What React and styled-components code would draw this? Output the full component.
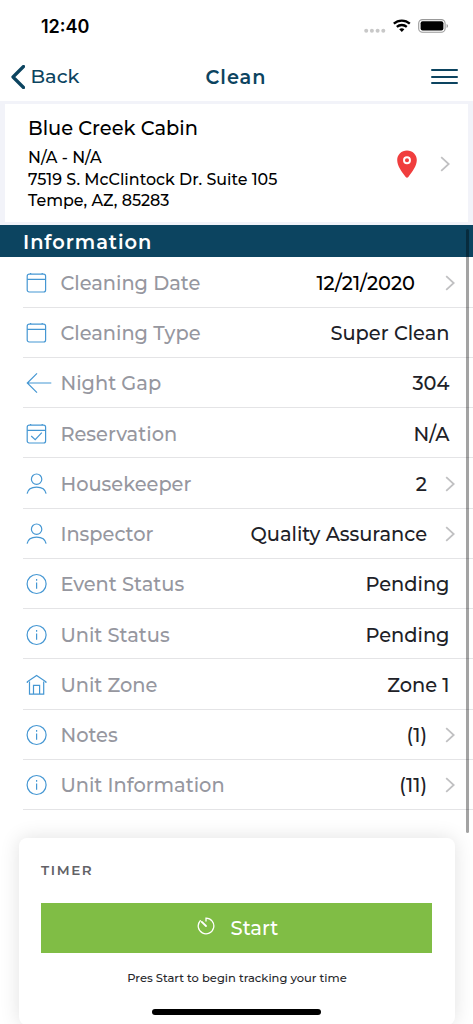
import React from 'react'
import styled, { createGlobalStyle } from 'styled-components'

const GlobalStyle = createGlobalStyle`
  * {
    box-sizing: border-box;
  }

  body {
    margin: 0;
    overflow: hidden;
    background: #fff;
    font-family: Montserrat, Inter, sans-serif;
    font-weight: 500;
  }
`

const Screen = styled.div`
  position: relative;
  display: flex;
  flex-direction: column;
  width: 473px;
  height: 1024px;
  overflow: hidden;
  background: #fff;

  > * {
    flex: none;
  }
`

const Text = styled.span`
  white-space: nowrap;
  letter-spacing: ${({ $spacing }) => $spacing || 0}px;
`

const StatusBar = styled.div`
  display: flex;
  align-items: center;
  justify-content: space-between;
  height: 52px;
  padding: 0 24px 0 41px;
`

const Clock = styled(Text)`
  padding-top: 1px;
  font-family: Inter, sans-serif;
  font-size: 18px;
  font-weight: 600;
  color: #000;
`

const NavBar = styled.div`
  display: grid;
  grid-template-columns: 1fr auto 1fr;
  align-items: center;
  height: 49px;
  padding: 0 15px 0 11px;
  color: #0c4460;
`

const BackButton = styled.div`
  display: flex;
  align-items: center;
  gap: 5.5px;
  font-size: 19.3px;

  span {
    margin-top: -1px;
  }
`

const Title = styled(Text)`
  padding-left: 3px;
  font-size: 19.3px;
  font-weight: 600;
`

const Menu = styled.div`
  display: flex;
  flex-direction: column;
  justify-self: end;
  gap: 4.6px;
  width: 27px;

  span {
    height: 2px;
    border-radius: 1px;
    background: #0c4460;
  }
`

const AddressArea = styled.div`
  height: 124px;
  padding: 3px 5px;
  background: #f2f3f9;
`

const AddressCard = styled.div`
  display: flex;
  align-items: center;
  height: 118px;
  padding: 1px 18px 0 23px;
  background: #fff;
`

const Address = styled.div`
  display: flex;
  flex: 1;
  flex-direction: column;
  color: #000;
  font-size: 15.9px;
  line-height: 21.7px;
`

const PropertyName = styled(Text)`
  margin-bottom: 6px;
  font-size: 19.4px;
  line-height: 26px;
`

const Pin = styled.svg`
  margin-right: 23px;
`

const SectionHeader = styled.div`
  display: flex;
  align-items: center;
  height: 32.3px;
  padding: 2px 0 0 23px;
  background: #0c4460;
  color: #fff;
  font-size: 19.4px;
  font-weight: 600;
`

const Row = styled.div`
  display: flex;
  align-items: center;
  height: 50.25px;
  margin-left: 23px;
  padding: 2px 18px 0 3px;
  border-bottom: 1px solid #e4e4e6;
  font-size: 19.4px;
`

const RowIcon = styled.svg`
  flex: none;
  width: 26px;
  height: 22px;
  margin-right: 8.4px;
  overflow: visible;
  fill: none;
  stroke: #4597d3;
  stroke-width: 1.2;
`

const Label = styled(Text)`
  flex: 1;
  color: #96979f;
`

const Value = styled(Text)`
  color: ${({ $dark }) => ($dark ? '#000' : '#202127')};
  padding-right: ${({ $inset }) => $inset}px;
`

const TimerCard = styled.div`
  display: flex;
  flex-direction: column;
  height: 187px;
  margin: 27.5px 18.5px 0 19px;
  padding: 22px 22.5px 0 22px;
  border-radius: 8px;
  background: #fff;
  box-shadow: 0 0 20px rgba(0, 0, 0, 0.12);
`

const TimerTitle = styled(Text)`
  color: #626266;
  font-size: 13.5px;
  font-weight: 600;
  line-height: 20px;
`

const StartButton = styled.div`
  display: flex;
  align-items: center;
  justify-content: center;
  gap: 16px;
  height: 50px;
  margin-top: 23px;
  padding: 1px 0 0 2px;
  background: #80bd45;
  color: #fff;
  font-size: 19.5px;

  svg {
    margin-bottom: 5px;
  }
`

const Hint = styled(Text)`
  align-self: center;
  margin-top: 16px;
  padding-left: 1px;
  color: #26272b;
  font-size: 11.5px;
  line-height: 18px;
`

const ScrollThumb = styled.div`
  position: absolute;
  top: 229px;
  right: 4px;
  width: 3px;
  height: 604px;
  border-radius: 2px;
  background: rgba(0, 0, 0, 0.36);
`

const HomeIndicator = styled.div`
  position: absolute;
  bottom: 9.5px;
  left: 152px;
  width: 169px;
  height: 5.5px;
  border-radius: 3px;
  background: #000;
`

const Chevron = () => (
  <svg width='10' height='16' viewBox='0 0 10 16' fill='none'>
    <path d='M1.2 1.2 8.7 8 1.2 14.8' stroke='#c0c0c2' strokeWidth='1.8' />
  </svg>
)

const StatusIcons = () => (
  <svg width='86' height='18' viewBox='0 0 86 18'>
    <g fill='#c8c8c8'>
      <circle cx='3.2' cy='13.8' r='2' />
      <circle cx='8.9' cy='13.8' r='2' />
      <circle cx='14.6' cy='13.8' r='2' />
      <circle cx='20.3' cy='13.8' r='2' />
    </g>
    <g fill='none' stroke='#000' strokeWidth='2.3'>
      <path d='M30.8 6.6a12 12 0 0 1 16 0' />
      <path d='M33.8 9.9a7.6 7.6 0 0 1 10 0' />
    </g>
    <path d='M36.2 12.3a4 4 0 0 1 5.2 0L38.8 15z' />
    <rect x='55.7' y='2.6' width='26.4' height='12.6' rx='3.8' fill='none' stroke='#999' strokeWidth='1.1' />
    <rect x='57.6' y='4.3' width='22.8' height='9.2' rx='2' />
    <path d='M83.6 7v4q1.4-.6 1.4-2t-1.4-2z' fill='#999' />
  </svg>
)

const icons = {
  calendar: (
    <>
      <rect x='1.2' y='2.2' width='18.4' height='17.8' rx='2' />
      <path d='M1.2 7.4h18.4M4.6 2V.9M16.2 2V.9' />
    </>
  ),
  check: (
    <>
      <rect x='1.2' y='2.2' width='18.4' height='17.8' rx='2' />
      <path d='M1.2 7.4h18.4M4.6 2V.9M16.2 2V.9M5.2 13l4 3.7 6.6-7' />
    </>
  ),
  arrow: <path d='M25.3 11H1.5M11 1.4 1.3 11l9.7 9.6' />,
  user: (
    <>
      <circle cx='10.6' cy='6.2' r='5.2' />
      <path d='M1.1 20.7c.7-4.1 4.4-6.5 9.5-6.5s8.8 2.4 9.5 6.5' />
    </>
  ),
  info: (
    <>
      <circle cx='10.6' cy='11' r='9.5' />
      <path d='M10.6 9.4v6.3M10.6 6v1.7' />
    </>
  ),
  home: (
    <>
      <path d='M1.3 9V7.8l9.3-6.4 9.3 6.4V9M3.5 7.4v12.8h14.2V7.4' />
      <path d='M7.5 20v-8.6h6.1V20' />
    </>
  )
}

const rows = [
  { icon: 'calendar', label: 'Cleaning Date', value: '12/21/2020', link: true, dark: true },
  { icon: 'calendar', label: 'Cleaning Type', value: 'Super Clean' },
  { icon: 'arrow', label: 'Night Gap', value: '304' },
  { icon: 'check', label: 'Reservation', value: 'N/A' },
  { icon: 'user', label: 'Housekeeper', value: '2', link: true },
  { icon: 'user', label: 'Inspector', value: 'Quality Assurance', link: true },
  { icon: 'info', label: 'Event Status', value: 'Pending' },
  { icon: 'info', label: 'Unit Status', value: 'Pending' },
  { icon: 'home', label: 'Unit Zone', value: 'Zone 1' },
  { icon: 'info', label: 'Notes', value: '(1)', link: true },
  { icon: 'info', label: 'Unit Information', value: '(11)', link: true }
]

const getInset = ({ dark, link }) => {
  if (dark) return 30
  return link ? 18 : 5.5
}

const InfoRow = ({ row }) => (
  <Row>
    <RowIcon viewBox='0 0 26 22'>{icons[row.icon]}</RowIcon>
    <Label>{row.label}</Label>
    <Value $dark={row.dark} $inset={getInset(row)}>
      {row.value}
    </Value>
    {row.link && <Chevron />}
  </Row>
)

const App = () => {
  return (
    <>
      <GlobalStyle />
      <Screen>
        <StatusBar>
          <Clock>12:40</Clock>
          <StatusIcons />
        </StatusBar>
        <NavBar>
          <BackButton>
            <svg width='14' height='24' viewBox='0 0 14 24' fill='none'>
              <path d='M12.5 1.5 2 12l10.5 10.5' stroke='#0c4460' strokeWidth='3.2' strokeLinecap='round' strokeLinejoin='round' />
            </svg>
            <Text>Back</Text>
          </BackButton>
          <Title $spacing={1}>Clean</Title>
          <Menu>
            <span />
            <span />
            <span />
          </Menu>
        </NavBar>
        <AddressArea>
          <AddressCard>
            <Address>
              <PropertyName>Blue Creek Cabin</PropertyName>
              <Text>N/A - N/A</Text>
              <Text>7519 S. McClintock Dr. Suite 105</Text>
              <Text>Tempe, AZ, 85283</Text>
            </Address>
            <Pin width='20' height='28' viewBox='0 0 20 28'>
              <path d='M10 .4C4.5.4.2 4.5.2 10c0 6.2 4.6 11.7 8.5 16.9q1.3 1.5 2.6 0C15.2 21.7 19.8 16.2 19.8 10 19.8 4.5 15.5.4 10 .4z' fill='#f03e3e' />
              <circle cx='10' cy='10.2' r='3' fill='none' stroke='#fff' strokeWidth='1.9' />
            </Pin>
            <Chevron />
          </AddressCard>
        </AddressArea>
        <SectionHeader>
          <Text $spacing={0.95}>Information</Text>
        </SectionHeader>
        {rows.map((row) => (
          <InfoRow key={row.label} row={row} />
        ))}
        <TimerCard>
          <TimerTitle $spacing={1.6}>TIMER</TimerTitle>
          <StartButton>
            <svg width='18' height='18' viewBox='0 0 18 18' fill='none' stroke='#fff' strokeWidth='1.3' strokeLinecap='round'>
              <path d='M9 4V1.2a7.8 7.8 0 1 1-5.7 2.5' />
              <path d='M4.8 4.8 9 9' strokeWidth='1.8' />
            </svg>
            <Text>Start</Text>
          </StartButton>
          <Hint>Pres Start to begin tracking your time</Hint>
        </TimerCard>
        <ScrollThumb />
        <HomeIndicator />
      </Screen>
    </>
  )
}

export default App
